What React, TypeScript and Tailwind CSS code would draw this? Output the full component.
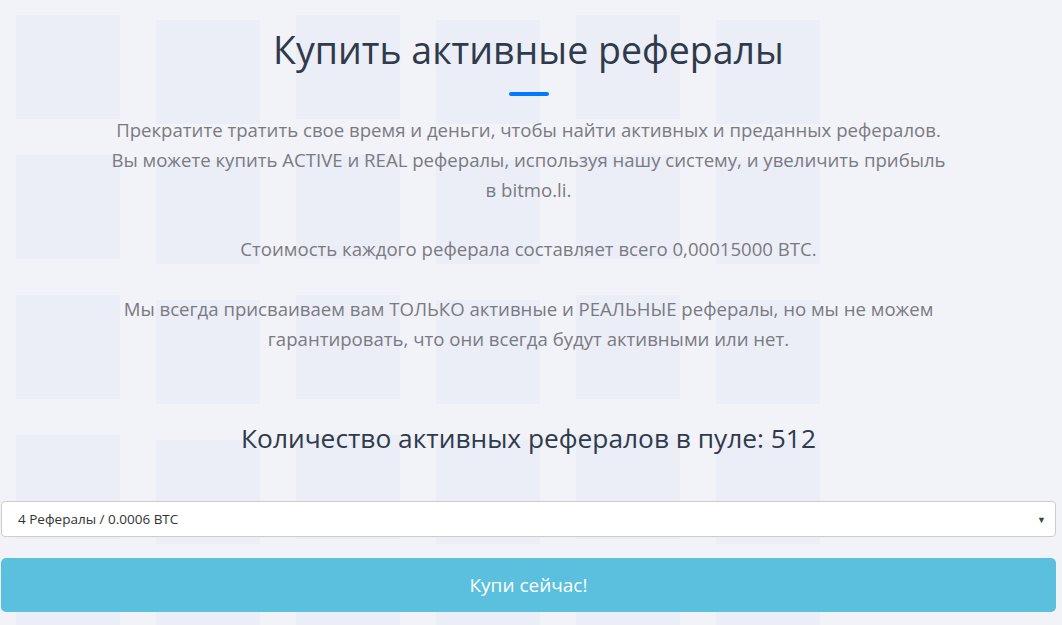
import React from 'react';

const cols = [0, 1, 2, 3, 4, 5];
const rows = [0, 1, 2, 3, 4];

const BgSquares: React.FC = () => (
  <div className="absolute inset-0 overflow-hidden pointer-events-none">
    <div className="flex gap-9 pl-4">
      {cols.map((c) => (
        <div key={c} className={`flex flex-col gap-9 ${c % 2 === 0 ? 'pt-[15px]' : 'pt-5'}`}>
          {rows.map((r) => (
            <div key={r} className="w-[104px] h-[104px] bg-[#ebeef6]" />
          ))}
        </div>
      ))}
    </div>
  </div>
);

export default function App() {
  return (
    <div
      className="relative w-[1062px] h-[625px] overflow-hidden bg-[#f2f3f8]"
      style={{ fontFamily: '"Open Sans", "Noto Sans", sans-serif' }}
    >
      <BgSquares />
      <main className="relative w-[1055px] ml-px flex flex-col items-center">
        <h1 className="mt-[22px] text-[37.5px] leading-[56px] text-[#2f3a4b] font-normal whitespace-nowrap">
          Купить активные рефералы
        </h1>
        <div className="mt-[14px] w-10 h-1 rounded-full bg-[#007bff]" />
        <p className="mt-[19px] text-center text-[18.6px] leading-[29.8px] text-[#7a7a82] whitespace-nowrap">
          Прекратите тратить свое время и деньги, чтобы найти активных и преданных рефералов.
          <br />
          Вы можете купить ACTIVE и REAL рефералы, используя нашу систему, и увеличить прибыль
          <br />
          в bitmo.li.
          <br />
          <br />
          Стоимость каждого реферала составляет всего 0,00015000 BTC.
          <br />
          <br />
          Мы всегда присваиваем вам ТОЛЬКО активные и РЕАЛЬНЫЕ рефералы, но мы не можем
          <br />
          гарантировать, что они всегда будут активными или нет.
        </p>
        <h2 className="mt-[67px] text-[26.3px] leading-[36px] text-[#2f3a4b] font-normal whitespace-nowrap">
          Количество активных рефералов в пуле: 512
        </h2>
        <div className="mt-[45px] w-full h-9 bg-white border border-[#cccccc] rounded-[4px] flex items-center justify-between pl-4 pr-[9px]">
          <span className="text-[13.5px] text-[#333]">4 Рефералы / 0.0006 BTC</span>
          <span className="text-[9px] text-[#444]">▼</span>
        </div>
        <button className="mt-[21px] w-full h-[54px] bg-[#5bc0de] rounded-[5px] text-white text-[19px]">
          Купи сейчас!
        </button>
      </main>
    </div>
  );
}
